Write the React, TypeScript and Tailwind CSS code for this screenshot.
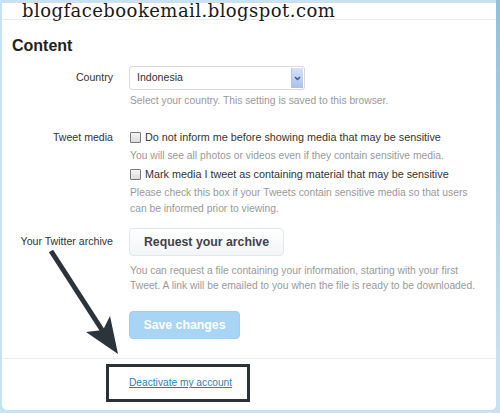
import React from "react";

const font = { fontFamily: '"Liberation Sans", Arial, sans-serif' };

function Checkbox() {
  return (
    <span className="inline-block w-[11px] h-[11px] shrink-0 border border-[#7a7a7a] rounded-[1px] bg-gradient-to-b from-[#f4f4f4] to-[#dcdcdc]" />
  );
}

export default function App() {
  return (
    <div className="relative w-[500px] h-[413px] bg-[#c6e2f3] overflow-hidden" style={font}>
      <div className="absolute right-0 top-0 w-[4px] h-[360px] bg-gradient-to-b from-[#8fc0de] to-[#c6e2f3]" />
      <div className="ml-[2px] mt-[2px] w-[494px] h-[408px] bg-white border-t border-[#dcdcdc] rounded-b-[5px] flex flex-col">
        <div className="h-[17px] border-b border-[#ebebeb] shrink-0" />
        <div className="pl-[10px] pt-[16px]">
          <h2 className="text-[16px] leading-[20px] font-bold text-[#222]">Content</h2>
        </div>
        <div className="flex flex-col text-[#333]">
          {/* Country */}
          <div className="flex items-center mt-[10px]">
            <div className="w-[111px] text-right text-[10.6px] text-[#333]">Country</div>
            <div className="ml-[16px] relative w-[176px] h-[24px] border border-[#d8d8d8] rounded-[3px] bg-white flex items-center">
              <span className="pl-[7px] text-[10.6px] text-[#333]">Indonesia</span>
              <div className="absolute right-[1px] top-[1px] bottom-[1px] w-[12px] bg-gradient-to-b from-[#d6e2fa] to-[#a9bfec] border-l border-[#b3c4e6] flex items-center justify-center">
                <svg width="7" height="5" viewBox="0 0 7 5">
                  <path d="M1 1 L3.5 3.5 L6 1" fill="none" stroke="#3e4f78" strokeWidth="1.4" />
                </svg>
              </div>
            </div>
          </div>
          <div className="ml-[128px] mt-[3px] text-[10.3px] leading-[16px] text-[#999]">
            Select your country. This setting is saved to this browser.
          </div>

          {/* Tweet media */}
          <div className="flex mt-[20px]">
            <div className="w-[111px] text-right text-[10.6px] leading-[16px] text-[#333]">Tweet media</div>
            <div className="ml-[17px] flex flex-col">
              <div className="flex items-center gap-[4px] h-[16px]">
                <Checkbox />
                <span className="text-[10.8px] text-[#333]">Do not inform me before showing media that may be sensitive</span>
              </div>
              <div className="mt-[3px] text-[10.3px] leading-[16px] text-[#999]">
                You will see all photos or videos even if they contain sensitive media.
              </div>
              <div className="mt-[2px] flex items-center gap-[4px] h-[16px]">
                <Checkbox />
                <span className="text-[10.8px] text-[#333]">Mark media I tweet as containing material that may be sensitive</span>
              </div>
              <div className="mt-[3px] w-[350px] text-[10.3px] leading-[16px] text-[#999]">
                Please check this box if your Tweets contain sensitive media so that users can be informed prior to viewing.
              </div>
            </div>
          </div>

          {/* Archive */}
          <div className="flex items-center mt-[11px]">
            <div className="w-[111px] text-right text-[10.6px] text-[#333]">Your Twitter archive</div>
            <button className="ml-[16px] w-[155px] h-[28px] border border-[#e1e8ed] rounded-[4px] bg-gradient-to-b from-white to-[#f3f5f6] text-[12.3px] font-bold text-[#3d4349]">
              Request your archive
            </button>
          </div>
          <div className="ml-[128px] mt-[7px] w-[352px] text-[10.3px] leading-[15px] text-[#999]">
            You can request a file containing your information, starting with your first Tweet. A link will be emailed to you when the file is ready to be downloaded.
          </div>

          <div className="ml-[127px] mt-[18px]">
            <button className="w-[111px] h-[28px] rounded-[4px] bg-[#a8d4f6] border border-[#a0cef2] text-white font-bold text-[12.3px]">
              Save changes
            </button>
          </div>
        </div>
        <div className="mt-[19px] border-t border-[#ececec]" />
        <div className="mt-[5px] ml-[104px] w-[144px] h-[38px] border-[3px] border-[#2c3136] flex items-center pl-[20px]">
          <a href="#" className="text-[10.2px] text-[#2f7fb5] underline">Deactivate my account</a>
        </div>
      </div>

      {/* Watermark */}
      <div
        className="absolute left-[22px] top-0 text-[18px] leading-[22px] tracking-[0.45px] text-[#1a1a1a]"
        style={{ fontFamily: '"DejaVu Serif", "Liberation Serif", serif' }}
      >
        blogfacebookemail.blogspot.com
      </div>

      {/* Arrow annotation */}
      <svg className="absolute left-0 top-0 pointer-events-none" width="500" height="413">
        <line x1="51" y1="251" x2="104" y2="333" stroke="#2b333b" strokeWidth="5" />
        <polygon points="118,354 86,332 103,330 110,316" fill="#2b333b" />
      </svg>
    </div>
  );
}
